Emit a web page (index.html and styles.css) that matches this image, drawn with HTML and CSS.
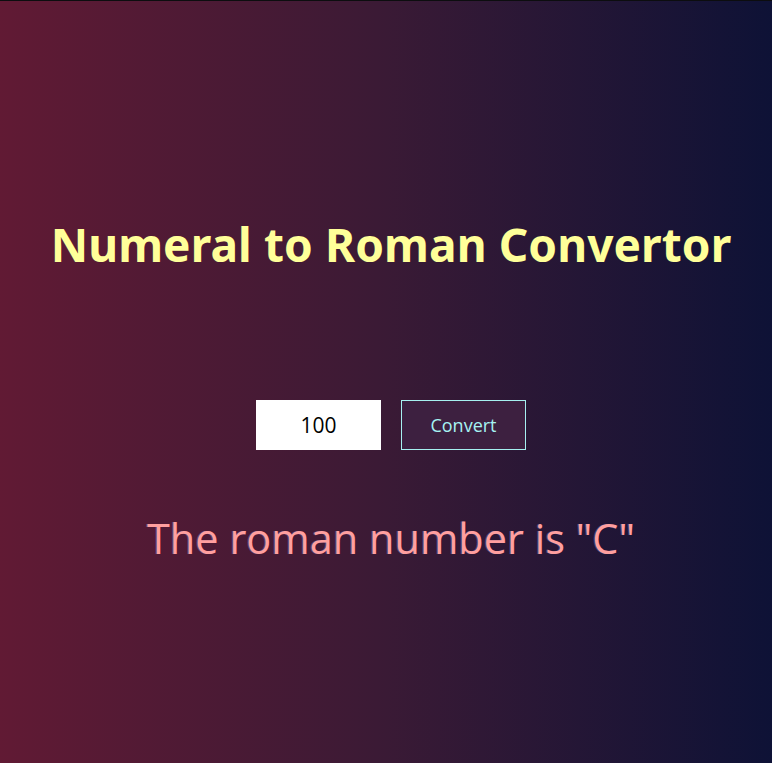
FILE: index.html
```html
<!DOCTYPE html>
<html lang="en">
<head>
<meta charset="utf-8">
<title>Numeral to Roman Convertor</title>
<link rel="stylesheet" href="styles.css">
</head>
<body>
<main class="page">
  <h1 class="title">Numeral to Roman Convertor</h1>
  <form class="controls">
    <input class="number-input" type="text" value="100">
    <button class="convert-btn" type="button">Convert</button>
  </form>
  <p class="result">The roman number is "C"</p>
</main>
</body>
</html>
```
FILE: styles.css
```css
html, body {
  margin: 0;
  padding: 0;
  height: 100%;
}
body {
  background: #0c0d0f;
  padding-top: 1px;
  box-sizing: border-box;
}
.page {
  height: 762px;
  padding-left: 10px;
  box-sizing: border-box;
  background: linear-gradient(to right, #611a34 0%, #3a1a35 50%, #0e1236 100%);
  display: flex;
  flex-direction: column;
  align-items: center;
  font-family: "Open Sans", "Noto Sans", sans-serif;
}
.title {
  margin: 212px 0 0;
  font-family: "Noto Sans", sans-serif;
  font-weight: 700;
  font-size: 46px;
  line-height: 62px;
  color: #ffff99;
  letter-spacing: 0.1px;
}
.controls {
  margin-top: 125px;
  display: flex;
  gap: 20px;
}
.number-input {
  box-sizing: border-box;
  width: 125px;
  height: 50px;
  border: none;
  outline: none;
  background: #ffffff;
  text-align: center;
  font-family: "Open Sans", sans-serif;
  font-size: 21px;
  color: #000;
  padding: 0;
}
.convert-btn {
  box-sizing: border-box;
  width: 125px;
  height: 50px;
  border: 1px solid #a6f0f0;
  background: #3d2040;
  color: #a6f3f3;
  font-family: "Open Sans", sans-serif;
  font-size: 18px;
  padding: 0;
}
.result {
  margin: 60px 0 0;
  font-family: "Open Sans", sans-serif;
  font-size: 41.5px;
  line-height: 56px;
  color: #ff9f9f;
  text-shadow: -1px 0 0 rgba(120, 160, 255, 0.35);
}
```
